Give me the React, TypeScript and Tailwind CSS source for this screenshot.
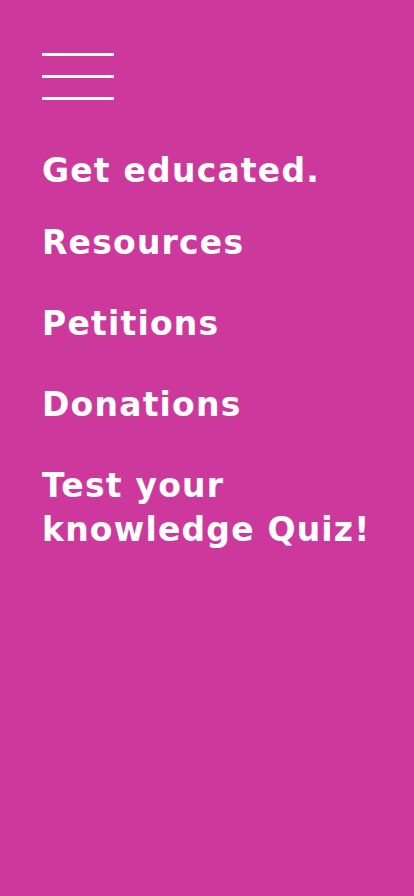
import React from 'react';

const links = ['Resources', 'Petitions', 'Donations', 'Test your knowledge Quiz!'];

const App: React.FC = () => {
  return (
    <div
      className="min-h-[896px] w-full bg-[#cd389d] pl-[42px] pr-[16px] pt-[53px] text-white"
      style={{ fontFamily: '"DejaVu Sans", Inter, sans-serif' }}
    >
      <button className="flex w-[72px] flex-col gap-[19px]" aria-label="Menu">
        <span className="block h-[3px] w-full bg-white"></span>
        <span className="block h-[3px] w-full bg-white"></span>
        <span className="block h-[3px] w-full bg-white"></span>
      </button>

      <h1 className="mt-[49px] text-[33px] font-bold leading-[44px] tracking-[1.2px]">
        Get educated.
      </h1>

      <nav className="mt-[28px] flex flex-col gap-[37px]">
        {links.map((link) => (
          <a
            key={link}
            href="#"
            className="block max-w-[340px] text-[33px] font-bold leading-[44px] tracking-[1.2px]"
          >
            {link}
          </a>
        ))}
      </nav>
    </div>
  );
};

export default App;
